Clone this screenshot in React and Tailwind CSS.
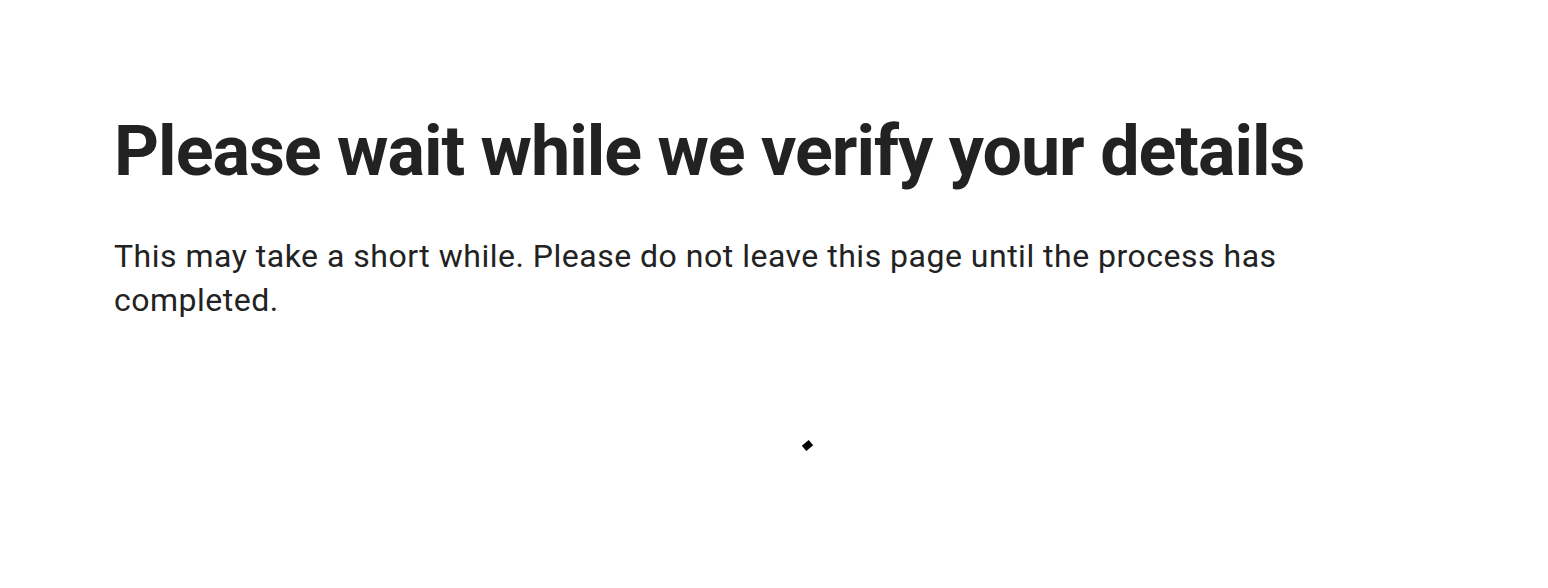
export default function App() {
  return (
    <div className="min-h-[588px] bg-white text-[#222222] font-['Roboto',sans-serif]">
      <div className="pl-[114px] pt-[110px] max-w-[1340px]">
        <h1 className="text-[70px] leading-[82px] font-bold tracking-[-1px] whitespace-nowrap">
          Please wait while we verify your details
        </h1>
        <p className="mt-[42px] text-[32px] leading-[44px] tracking-[0.5px]">
          This may take a short while. Please do not leave this page until the process has completed.
        </p>
      </div>
      <div className="flex justify-center pt-[119px] pl-[66px]">
        <div className="w-[7px] h-[9px] bg-black rotate-[50deg]" />
      </div>
    </div>
  );
}
